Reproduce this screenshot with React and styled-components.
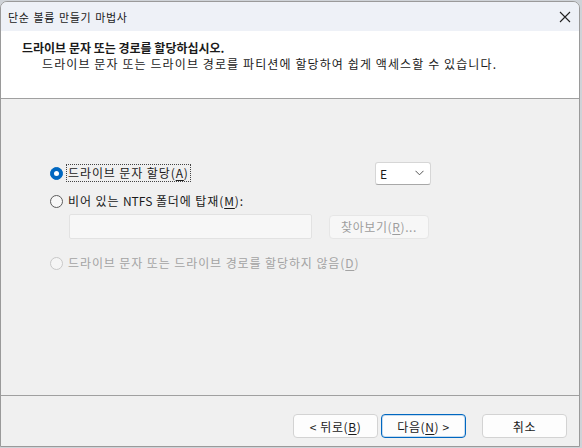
import React from "react"
import styled, { createGlobalStyle } from "styled-components"

const GlobalStyle = createGlobalStyle`
  html, body {
    margin: 0;
    padding: 0;
    background: #cfd3d8;
    font-family: "Noto Sans CJK KR", "Noto Sans", sans-serif;
    font-size: 12px;
    color: #1a1a1a;
  }
`

const Window = styled.div`
  box-sizing: border-box;
  width: 580px;
  height: 446px;
  margin-top: 1px;
  display: flex;
  flex-direction: column;
  background: #f0f0f0;
  border: 1px solid #9a9a9a;
  border-radius: 7px 7px 0 0;
  overflow: hidden;
`

const TitleBar = styled.div`
  height: 29px;
  display: flex;
  align-items: center;
  justify-content: space-between;
  padding: 0 7px 0 7px;
  background: #eef1f7;
`

const Title = styled.span`
  font-size: 11px;
  letter-spacing: 0.6px;
  word-spacing: 1px;
`

const Header = styled.div`
  height: 68px;
  background: #ffffff;
  border-bottom: 1px solid #a0a0a0;
  padding: 9px 0 0 21px;
  box-sizing: border-box;
`

const HeaderTitle = styled.div`
  font-weight: 700;
  font-size: 12px;
  line-height: 16px;
`

const HeaderSub = styled.div`
  padding-left: 20px;
  line-height: 16px;
  letter-spacing: 1.1px;
`

const Body = styled.div`
  flex: 1;
  padding: 62px 0 0 49px;
  display: flex;
  flex-direction: column;
`

const Row = styled.div`
  width: 381px;
  height: 24px;
  display: flex;
  align-items: center;
  margin-top: ${p => p.$top || 0}px;
  color: ${p => (p.$disabled ? "#a3a3a3" : "#1a1a1a")};
`

const Radio = styled.span`
  box-sizing: border-box;
  width: 13px;
  height: 13px;
  border-radius: 50%;
  margin-right: 3px;
  flex-shrink: 0;
  background: ${p => (p.$checked ? "#0067c0" : p.$disabled ? "#f5f5f5" : "#f7f7f7")};
  border: 1px solid ${p => (p.$checked ? "#0067c0" : p.$disabled ? "#c8c8c8" : "#5c5c5c")};
  display: flex;
  align-items: center;
  justify-content: center;

  &::after {
    content: "";
    display: ${p => (p.$checked ? "block" : "none")};
    width: 5px;
    height: 5px;
    border-radius: 50%;
    background: #fff;
  }
`

const Label = styled.span`
  padding: 0 1px;
  line-height: 16px;
  letter-spacing: 0.9px;
  border: 1px dotted ${p => (p.$focus ? "#444" : "transparent")};
`

const Key = styled.u`
  text-underline-offset: 2px;
`

const Latin = styled.span`
  letter-spacing: 0;
`

const Select = styled.div`
  box-sizing: border-box;
  margin-left: auto;
  width: 56px;
  height: 23px;
  background: #fff;
  border: 1px solid #d6d6d6;
  border-bottom-color: #a8a8a8;
  border-radius: 3px;
  display: flex;
  align-items: center;
  justify-content: space-between;
  padding: 0 6px 0 4px;
`

const FieldRow = styled.div`
  display: flex;
  align-items: center;
  padding-left: 19px;
  gap: 17px;
  margin-top: 1px;
  margin-bottom: 12px;
`

const Field = styled.div`
  box-sizing: border-box;
  width: 243px;
  height: 25px;
  background: #f7f7f7;
  border: 1px solid #e2e2e2;
  border-radius: 2px;
`

const Button = styled.button`
  box-sizing: border-box;
  width: ${p => p.$w || 85}px;
  height: 24px;
  font-family: inherit;
  font-size: 12px;
  letter-spacing: 0.6px;
  border-radius: 4px;
  background: ${p => (p.disabled ? "#f7f7f7" : "#fdfdfd")};
  color: ${p => (p.disabled ? "#9d9d9d" : "#1a1a1a")};
  border: 1px solid ${p => (p.$primary ? "#0067c0" : p.disabled ? "#e6e6e6" : "#d3d3d3")};
  box-shadow: ${p => (p.$primary ? "inset 0 0 0 1px #c5dbef" : "none")};
  padding: 0;
  display: flex;
  align-items: center;
  justify-content: center;
`

const Footer = styled.div`
  height: 51px;
  border-top: 1px solid #a0a0a0;
  box-sizing: border-box;
  display: flex;
  justify-content: flex-end;
  align-items: flex-start;
  padding: 18px 12px 0 0;
`

const ButtonGroup = styled.div`
  display: flex;
  gap: 3px;
  margin-right: 16px;
`

const Close = () => (
  <svg width="14" height="14" viewBox="0 0 14 14">
    <path d="M2 2 L12 12 M12 2 L2 12" stroke="#222" strokeWidth="1.1" fill="none" />
  </svg>
)

const Chevron = () => (
  <svg width="9" height="6" viewBox="0 0 9 6">
    <path d="M0.5 0.8 L4.5 4.8 L8.5 0.8" stroke="#555" strokeWidth="1" fill="none" />
  </svg>
)

export default function App() {
  return (
    <>
      <GlobalStyle />
      <Window>
        <TitleBar>
          <Title>단순 볼륨 만들기 마법사</Title>
          <Close />
        </TitleBar>
        <Header>
          <HeaderTitle>드라이브 문자 또는 경로를 할당하십시오.</HeaderTitle>
          <HeaderSub>드라이브 문자 또는 드라이브 경로를 파티션에 할당하여 쉽게 액세스할 수 있습니다.</HeaderSub>
        </Header>
        <Body>
          <Row>
            <Radio $checked />
            <Label $focus>드라이브 문자 할당(<Key>A</Key>)</Label>
            <Select>
              <span>E</span>
              <Chevron />
            </Select>
          </Row>
          <Row $top={4}>
            <Radio />
            <Label>비어 있는 <Latin>NTFS</Latin> 폴더에 탑재(<Key>M</Key>):</Label>
          </Row>
          <FieldRow>
            <Field />
            <Button disabled $w={100}>찾아보기(<Key>R</Key>)...</Button>
          </FieldRow>
          <Row $disabled>
            <Radio $disabled />
            <Label>드라이브 문자 또는 드라이브 경로를 할당하지 않음(<Key>D</Key>)</Label>
          </Row>
        </Body>
        <Footer>
          <ButtonGroup>
            <Button>&lt; 뒤로(<Key>B</Key>)</Button>
            <Button $primary>다음(<Key>N</Key>) &gt;</Button>
          </ButtonGroup>
          <Button>취소</Button>
        </Footer>
      </Window>
    </>
  )
}
